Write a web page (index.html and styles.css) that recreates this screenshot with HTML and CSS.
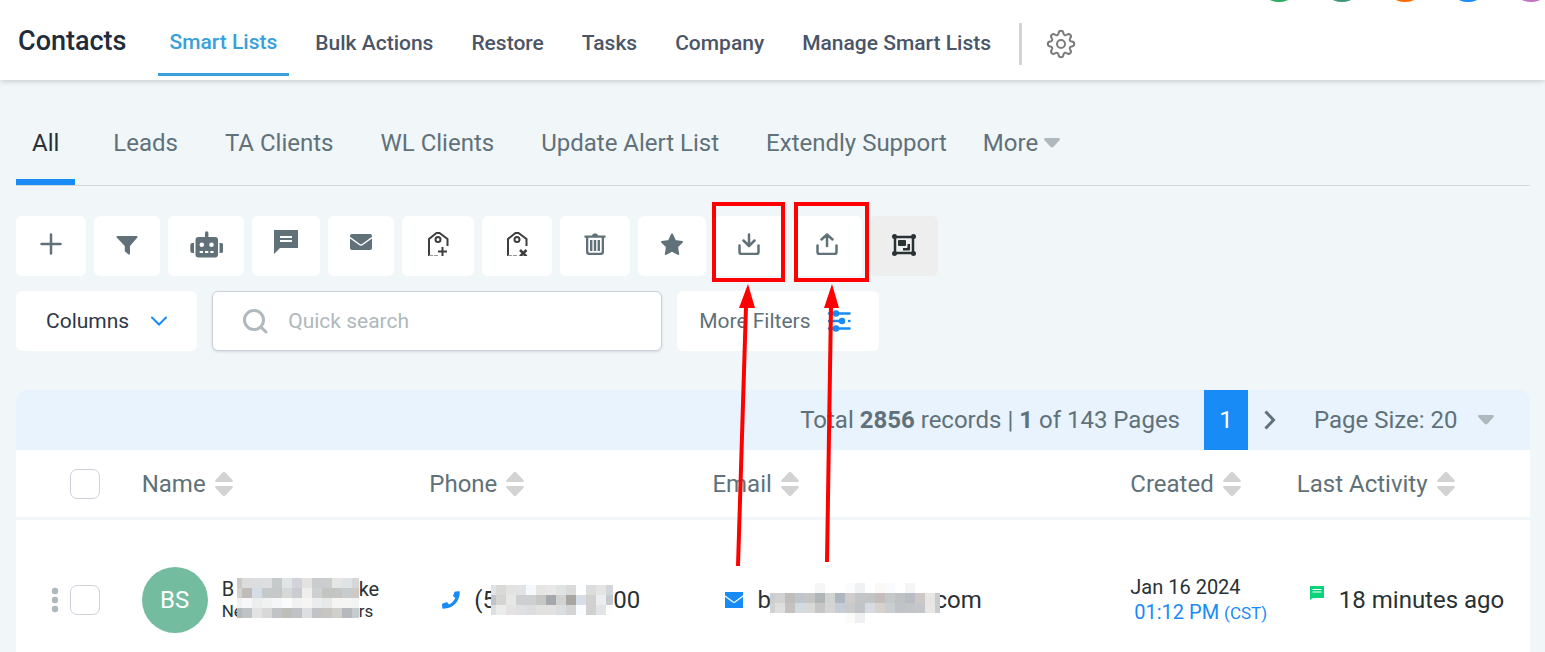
FILE: index.html
```html
<!DOCTYPE html>
<html lang="en">
<head>
    <meta charset="UTF-8">
    <meta name="viewport" content="width=device-width, initial-scale=1.0">
    <title>Contacts - Smart Lists</title>
    <link rel="stylesheet" href="styles.css">
</head>
<body>
    <header class="header">
        <h1 class="title">Contacts</h1>
        <nav class="main-nav">
            <a class="active" href="#">Smart Lists</a>
            <a href="#">Bulk Actions</a>
            <a href="#">Restore</a>
            <a href="#">Tasks</a>
            <a href="#">Company</a>
            <a href="#">Manage Smart Lists</a>
        </nav>
        <button class="settings" aria-label="Settings">
            <svg width="30" height="30" viewBox="0 0 30 30" fill="none" stroke="#7b7b7b" stroke-width="2" stroke-linejoin="round">
                <path d="M12.6 4.2C13 1 17 1 17.4 4.2C17.7 6.3 19.2 6.9 20.9 5.7C23.4 3.8 26.2 6.6 24.3 9.1C23.1 10.8 23.7 12.3 25.8 12.6C29 13 29 17 25.8 17.4C23.7 17.7 23.1 19.2 24.3 20.9C26.2 23.4 23.4 26.2 20.9 24.3C19.2 23.1 17.7 23.7 17.4 25.8C17 29 13 29 12.6 25.8C12.3 23.7 10.8 23.1 9.1 24.3C6.6 26.2 3.8 23.4 5.7 20.9C6.9 19.2 6.3 17.7 4.2 17.4C1 17 1 13 4.2 12.6C6.3 12.3 6.9 10.8 5.7 9.1C3.8 6.6 6.6 3.8 9.1 5.7C10.8 6.9 12.3 6.3 12.6 4.2Z"/>
                <circle cx="15" cy="15" r="4"/>
            </svg>
        </button>
        <div class="avatars">
            <span class="green"></span>
            <span class="teal"></span>
            <span class="orange"></span>
            <span class="blue"></span>
            <span class="purple"></span>
        </div>
    </header>

    <main class="content">
        <nav class="tabs">
            <a class="active" href="#">All</a>
            <a href="#">Leads</a>
            <a href="#">TA Clients</a>
            <a href="#">WL Clients</a>
            <a href="#">Update Alert List</a>
            <a href="#">Extendly Support</a>
            <button class="more">More
                <svg width="16" height="10" viewBox="0 0 16 10" fill="#afb8bc"><path d="M1.500 0h13c1.200 0 1.800 1.200 1 2.200L9.500 8.800c-.8.9-2.200.9-3 0L.5 2.200C-.3 1.200.3 0 1.500 0z"/></svg>
            </button>
        </nav>

        <div class="toolbar">
            <button aria-label="Add contact">
                <svg width="22" height="22" viewBox="0 0 22 22" stroke="#607179" stroke-width="2.500" stroke-linecap="round"><path d="M11 1.500v19M1.500 11h19"/></svg>
            </button>
            <button aria-label="Pipeline change">
                <svg width="22" height="22" class="narrow" viewBox="0 0 22 22" fill="#607179"><path d="M1.500 3h19c1 0 1.300 1 .6 1.700L14 13v7.500c0 1-1 1.300-1.700.7l-3-2.400a1.500 1.500 0 0 1-.5-1.200V13L.9 4.700C.2 4 .5 3 1.500 3z"/></svg>
            </button>
            <button aria-label="Add to automation">
                <svg class="wide" width="33" height="27" viewBox="0 0 33 27" fill="#607179"><path fill-rule="evenodd" d="M15 6V2a1.700 1.700 0 0 1 3.400 0v4H25a3 3 0 0 1 3 3v14.500a3 3 0 0 1-3 3H8.500a3 3 0 0 1-3-3V9a3 3 0 0 1 3-3zM11.800 11.500a2.300 2.300 0 1 0 0 4.600 2.300 2.300 0 0 0 0-4.600zM21.500 11.500a2.300 2.300 0 1 0 0 4.600 2.300 2.300 0 0 0 0-4.600zM9.700 20v2H13v-2zM15 20v2h3.300v-2zM20.300 20v2h3.300v-2z"/><path d="M4 12v10H2.500A2.200 2.200 0 0 1 .3 19.800v-5.600A2.200 2.200 0 0 1 2.500 12zM29.500 12v10H31a2.200 2.200 0 0 0 2.200-2.200v-5.600A2.200 2.200 0 0 0 31 12z"/></svg>
            </button>
            <button class="small" aria-label="Send SMS">
                <svg class="raised" width="24" height="24" viewBox="0 0 24 24"><path fill="#607179" d="M0 0h24v18H6l-6 6z"/><path stroke="#fff" stroke-width="2" d="M6 7h12M6 11h12"/></svg>
            </button>
            <button aria-label="Send email">
                <svg class="narrow raised" width="22" height="18" viewBox="0 0 22 18"><rect y="1" width="22" height="16" rx="2" fill="#607179"/><path d="M0 4.500l9.500 7c1 .8 2 .8 3 0l9.500-7" fill="none" stroke="#fff" stroke-width="1.500"/></svg>
            </button>
            <button aria-label="Add tag">
                <svg width="24" height="24" viewBox="0 0 24 24" fill="none" stroke="#3e3e3e" stroke-width="2"><path d="M3 24V7l7.500-6h3L21.500 7v7"/><path stroke-width="1" stroke="#999" d="M3 23.500h4M8 23.500h4"/><circle cx="12" cy="7.500" r="2.500"/><path d="M16.500 15v9M12 19.500h9"/></svg>
            </button>
            <button class="even" aria-label="Remove tag">
                <svg width="24" height="24" viewBox="0 0 24 24" fill="none" stroke="#3e3e3e" stroke-width="2"><path d="M3 24V7l7.500-6h3L21.500 7v7"/><path stroke-width="1" stroke="#999" d="M3 23.500h4M8 23.500h4"/><circle cx="12" cy="7.500" r="2.500"/><path stroke-width="2.500" d="M15 18l6.500 6.500M21.500 18L15 24.500"/></svg>
            </button>
            <button aria-label="Delete">
                <svg width="22" height="22" viewBox="0 0 22 22" fill="#607179"><path fill-rule="evenodd" d="M8 2.500A2.500 2.500 0 0 1 10 .5h2a2.500 2.500 0 0 1 2 2h7.500v2.300H20V19a3 3 0 0 1-3 3H5a3 3 0 0 1-3-3V4.800H.5V2.500zM4.300 4.800v13.500a1.500 1.500 0 0 0 1.500 1.500h10.400a1.500 1.500 0 0 0 1.500-1.500V4.800z"/><path d="M6 7h2.400v11H6zM9.800 7h2.400v11H9.800zM13.600 7H16v11h-2.400z"/></svg>
            </button>
            <button class="small" aria-label="Send review request">
                <svg width="24" height="22" viewBox="0 0 24 22" fill="#607179" stroke="#607179" stroke-width="2" stroke-linejoin="round"><path d="M12 1.500l3 6.400 7 1-5 5 1.200 7L12 17.500 5.800 20.900l1.200-7-5-5 7-1z"/></svg>
            </button>
            <button aria-label="Export contacts">
                <svg width="22" height="22" viewBox="0 0 22 22" fill="none" stroke="#607179" stroke-width="2.500" stroke-linecap="round" stroke-linejoin="round"><path d="M11 1.500v11M5.500 7.500L11 13l5.500-5.500M1.500 12.500V19a2 2 0 0 0 2 2h15a2 2 0 0 0 2-2v-6.500"/></svg>
            </button>
            <button aria-label="Import contacts">
                <svg width="22" height="22" viewBox="0 0 22 22" fill="none" stroke="#607179" stroke-width="2.500" stroke-linecap="round" stroke-linejoin="round"><path d="M11 13V1.500M5.500 6.500L11 1.500l5.500 5M1.500 12.500V19a2 2 0 0 0 2 2h15a2 2 0 0 0 2-2v-6.500"/></svg>
            </button>
            <button class="small muted" aria-label="Merge contacts">
                <svg width="24" height="22" viewBox="0 0 24 22" fill="#2a3135"><path fill="none" stroke="#2a3135" stroke-width="2.500" d="M3 3h18v16H3z"/><circle cx="2.500" cy="2.500" r="2.500"/><circle cx="21.500" cy="2.500" r="2.500"/><circle cx="2.500" cy="19.500" r="2.500"/><circle cx="21.500" cy="19.500" r="2.500"/><rect x="6" y="6" width="8" height="6" rx="1"/><path d="M15.500 10H18v5.500a1 1 0 0 1-1 1h-6V14h3.500a1 1 0 0 0 1-1z"/></svg>
            </button>
        </div>

        <div class="filters">
            <button class="columns">Columns
                <svg width="16" height="10" viewBox="0 0 16 10" fill="none" stroke="#188bf6" stroke-width="2" stroke-linecap="round"><path d="M1 1.500l7 7 7-7"/></svg>
            </button>
            <label class="search">
                <svg width="25" height="25" viewBox="0 0 25 25" fill="none" stroke="#afb8bc" stroke-width="3" stroke-linecap="round"><circle cx="11" cy="11" r="9.500"/><path d="M18 18l5 5"/></svg>
                <input type="text" placeholder="Quick search" aria-label="Quick search">
            </label>
            <button class="more-filters">More Filters
                <svg width="24" height="22" viewBox="0 0 24 22" fill="#188bf6" stroke="#188bf6" stroke-width="2.500" stroke-linecap="round"><path d="M2 3.500h20.500M2 11h14M22 11h.500M2 18.500h20.500"/><circle cx="9" cy="3.500" r="2"/><circle cx="15" cy="11" r="2"/><circle cx="9" cy="18.500" r="2"/></svg>
            </button>
        </div>

        <section class="panel">
            <div class="pager">
                <p>Total <b>2856</b> records | <b>1</b> of 143 Pages</p>
                <button class="page">1</button>
                <button class="next" aria-label="Next page">
                    <svg width="12" height="20" viewBox="0 0 12 20" fill="none" stroke="#607179" stroke-width="3"><path d="M1.500 1.500l8 8.500-8 8.500"/></svg>
                </button>
                <label class="page-size">
                    <select aria-label="Page size">
                        <option>Page Size: 20</option>
                    </select>
                    <svg width="16" height="10" viewBox="0 0 16 10" fill="#afb8bc"><path d="M1.500 0h13c1.200 0 1.800 1.200 1 2.200L9.500 8.800c-.8.9-2.200.9-3 0L.5 2.200C-.3 1.200.3 0 1.500 0z"/></svg>
                </label>
            </div>

            <table class="contacts">
                <colgroup>
                    <col class="col-check">
                    <col class="col-name">
                    <col class="col-phone">
                    <col class="col-email">
                    <col class="col-created">
                    <col class="col-activity">
                </colgroup>
                <thead>
                    <tr>
                        <th><div class="check"><input type="checkbox" aria-label="Select all"></div></th>
                        <th>Name <svg class="sort" width="18" height="24" viewBox="0 0 18 24"><path d="M7.600.6a2 2 0 0 1 2.800 0l7 7.400c1 1 .3 2-.8 2H1.400c-1.100 0-1.800-1-.8-2zM7.600 23.400a2 2 0 0 0 2.800 0l7-7.400c1-1 .3-2-.8-2H1.400c-1.100 0-1.800 1-.8 2z"/></svg></th>
                        <th>Phone <svg class="sort" width="18" height="24" viewBox="0 0 18 24"><path d="M7.600.6a2 2 0 0 1 2.800 0l7 7.400c1 1 .3 2-.8 2H1.400c-1.100 0-1.800-1-.8-2zM7.600 23.400a2 2 0 0 0 2.800 0l7-7.400c1-1 .3-2-.8-2H1.400c-1.100 0-1.800 1-.8 2z"/></svg></th>
                        <th>Email <svg class="sort" width="18" height="24" viewBox="0 0 18 24"><path d="M7.600.6a2 2 0 0 1 2.800 0l7 7.400c1 1 .3 2-.8 2H1.400c-1.100 0-1.800-1-.8-2zM7.600 23.400a2 2 0 0 0 2.800 0l7-7.400c1-1 .3-2-.8-2H1.400c-1.100 0-1.800 1-.8 2z"/></svg></th>
                        <th>Created <svg class="sort" width="18" height="24" viewBox="0 0 18 24"><path d="M7.600.6a2 2 0 0 1 2.800 0l7 7.400c1 1 .3 2-.8 2H1.400c-1.100 0-1.800-1-.8-2zM7.600 23.400a2 2 0 0 0 2.800 0l7-7.400c1-1 .3-2-.8-2H1.400c-1.100 0-1.800 1-.8 2z"/></svg></th>
                        <th>Last Activity <svg class="sort" width="18" height="24" viewBox="0 0 18 24"><path d="M7.600.6a2 2 0 0 1 2.800 0l7 7.400c1 1 .3 2-.8 2H1.400c-1.100 0-1.800-1-.8-2zM7.600 23.400a2 2 0 0 0 2.800 0l7-7.400c1-1 .3-2-.8-2H1.400c-1.100 0-1.800 1-.8 2z"/></svg></th>
                    </tr>
                </thead>
                <tbody>
                    <tr>
                        <td>
                            <div class="check">
                                <svg width="8" height="26" viewBox="0 0 8 26" fill="#afb8bc"><circle cx="4" cy="4" r="3.200"/><circle cx="4" cy="13" r="3.200"/><circle cx="4" cy="22" r="3.200"/></svg>
                                <input type="checkbox" aria-label="Select contact">
                            </div>
                        </td>
                        <td>
                            <div class="cell">
                                <span class="initials">BS</span>
                                <div class="masked-name">
                                    <div class="head"><span>B</span><small>Ne</small></div>
                                    <svg class="mosaic" width="122" height="40" data-cells="c9cac8 dcdcdc dcdde1 dcdee0 c6cacb dfe4e5 d1d3d8 e5e3e1 c9cdd0 cbcdcf e6e7e5 dde3e7 d6d7d9|d2d3ce c0bdb9 d4dce6 c6c9c9 c4c8c8 d5d8d4 caccd2 eeeeec cfd1d1 c3c5c2 c5c6c4 c9cccf cdc9c5|f1f1f2 f6f7f9 eceded f0f1f1 f4f6f8 fafbfa f2f2f2 f6f5f4 ebeced e7e9e9 f6f5f3 f5f5f4 f2f4f4|b3b8bb c0c3c6 e2e3e2 d8d8d8 c1c4c6 bfbfba bfc3c6 dcdee0 c1c3c6 c7c6c2 cfd0cc b5b8bc c6cccd"></svg>
                                    <div><span>ke</span><small>rs</small></div>
                                </div>
                            </div>
                        </td>
                        <td>
                            <div class="cell inset">
                                <svg width="18" height="18" viewBox="0 0 18 18" fill="#188bf6"><path d="M13.500 0.500L17 .300c.6 0 .8.400.8 1C17.500 11 11 17.500 1.300 17.800c-.6 0-.9-.3-1-.8L0 13.500c0-.5.300-.8.700-1l3.600-1.300c.4-.1.800 0 1.100.3l1.600 1.900c3-1.400 5-3.400 6.300-6.300L11.400 5.400c-.3-.3-.4-.7-.2-1.100L12.500 1c.2-.3.500-.5 1-.5z"/></svg>
                                <div class="masked phone">
                                    <span>(5</span>
                                    <svg class="mosaic" width="122" height="30" data-cells="dfe4e6 d9d9d8 e2e2e2 e2e3e4 f4f9fd e5e5e4 e8e8e8 dfe3e3 dadada fcfeff dcdcdc e4e4e4 d2d6da|c0c3ca d4d4d3 e6e8e6 ccd0d1 cdcfd0 c6c6c5 a3a8ad d2d2d2 a8a6a1 d5dde6 d1d1d0 ebedf0 c5cbd2|dcdfe2 ebeded e4e3e1 dfe0e2 dbdde1 e1e1e0 e0e1e0 dbdee1 d4d4d4 fafdff d0d0d0 e2e3e6 fdfdfd"></svg>
                                    <span>00</span>
                                </div>
                            </div>
                        </td>
                        <td>
                            <div class="cell inset">
                                <svg width="18" height="18" viewBox="0 0 18 18"><rect y="1" width="18" height="16" fill="#188bf6"/><path d="M0 5l8 6c.7.500 1.300.500 2 0l8-6" fill="none" stroke="#fff" stroke-width="1.200"/></svg>
                                <div class="masked email">
                                    <span>b</span>
                                    <svg class="mosaic" width="170" height="40" data-cells="fff fff fff fff fff f6f6f6 fff fff fcfcfc f0f1f2 fff fbf8f5 fafbfe fff f5f5f5 fff fff fff|c9ced0 d2d2d2 c0bcbb bfc5cb c5c6c4 b0b5b8 d3d4d2 aeb6bf cfcccb c2c6c8 c2c4c5 c3bebb c5c8c9 bfc1c2 b7bdc2 cbc8c6 e8e6e3 c7cdcf|d0d2d2 dedede c4c1c0 d2dbdf d8d8d7 c5c6c5 d4d5d4 c5ced6 c9cacc c0c4c9 d8dce2 d8d2cf c9ced3 bfc3c7 c1c5c8 c5c6c9 e9e7e3 c8cdcf|fff fff fff fff fff fff fff fff fbfbfa eff0f1 fff fff fff fff fff fff fff fff"></svg>
                                    <span class="under">com</span>
                                </div>
                            </div>
                        </td>
                        <td>
                            <div class="date">Jan 16 2024</div>
                            <div class="date time">01:12 PM <small>(CST)</small></div>
                        </td>
                        <td>
                            <div class="cell inset">
                                <svg class="sms" width="14" height="14" viewBox="0 0 14 14"><path fill="#0bd37c" d="M0 0h14v12H3l-3 2z"/><path stroke="#fff" d="M2.500 3.500h9M2.500 6h9"/></svg>
                                <span>18 minutes ago</span>
                            </div>
                        </td>
                    </tr>
                </tbody>
            </table>
        </section>
    </main>

    <svg class="callout" width="160" height="370" viewBox="0 0 160 370" fill="none" stroke="#fe0000" stroke-width="4">
        <path d="M4 4h69v76H4zM86 4h71v76H86z"/>
        <path d="M28 366L36 106M117 362L121 106"/>
        <path fill="#fe0000" stroke="none" d="M38 84l7 24H29zM122 84l7 24h-15z"/>
    </svg>

    <script src="mosaic.js"></script>
</body>
</html>
```
FILE: styles.css
```css
* {
    margin: 0;
    padding: 0;
    box-sizing: border-box;
}

body {
    min-height: 100vh;
    font-family: Roboto, "Liberation Sans", sans-serif;
    font-size: 24px;
    color: #607179;
    background: #f1f6f9;
}

button, input, select {
    font: inherit;
    color: inherit;
    background: none;
    border: none;
}

button {
    cursor: pointer;
}

a {
    color: inherit;
    text-decoration: none;
}

svg {
    display: block;
    flex-shrink: 0;
}

/* header */
.header {
    position: relative;
    display: flex;
    align-items: center;
    height: 80px;
    padding-left: 18px;
    background: #fff;
    box-shadow: 0 1px 6px rgba(0, 0, 0, 0.2);
}

.title {
    margin-right: 31px;
    padding-top: 2px;
    font-size: 27px;
    font-weight: 500;
    color: #222b3a;
}

.main-nav {
    display: flex;
    gap: 14px;
    padding-top: 4px;
    font-size: 21px;
    font-weight: 500;
    color: #4a5568;
    white-space: nowrap;
}

.main-nav a {
    height: 68px;
    padding: 0 12px;
    line-height: 70px;
}

.main-nav .active {
    color: #38a0db;
    border-bottom: 3px solid #38a0db;
    line-height: 68px;
}

.settings {
    height: 42px;
    margin: 8px 0 0 16px;
    padding-left: 24px;
    border-left: 3px solid #d1d3d8;
}

.avatars {
    position: absolute;
    top: 0;
    right: 0;
    display: flex;
    align-items: flex-end;
    gap: 21px;
    width: 287px;
    height: 2px;
    overflow: hidden;
}

.avatars span {
    flex: 0 0 42px;
    height: 42px;
    border-radius: 50%;
}

.green { background: #27ae60; }
.teal { background: #3f967c; }
.orange { background: #ff6a00; }
.blue { background: #188bf6; }
.purple { background: #c573bd; }

.content {
    padding: 20px 15px 0 16px;
}

/* list tabs */
.tabs {
    display: flex;
    height: 86px;
    border-bottom: 1px solid #d3dade;
    white-space: nowrap;
}

.tabs a {
    margin-right: 15px;
    padding: 0 16px;
    line-height: 86px;
}

.tabs .active {
    margin-right: 22px;
    color: #2a3135;
    border-bottom: 6px solid #188bf6;
}

.tabs a:nth-child(6) {
    margin-right: 4px;
}

.more {
    display: flex;
    align-items: center;
    gap: 6px;
    padding-left: 16px;
}

/* toolbar */
.toolbar {
    display: flex;
    gap: 8px;
    margin: 30px 0 15px;
}

.toolbar button {
    display: flex;
    align-items: center;
    justify-content: center;
    height: 60px;
    padding: 0 24px 4px;
    border-radius: 6px;
    background: #fff;
}

.toolbar .small {
    padding: 0 22px 4px;
}

.toolbar .even {
    padding: 0 23px 4px;
}

.toolbar .narrow {
    margin: 0 -2px;
}

.toolbar .wide {
    margin: 0 -3px 0 -2px;
}

.toolbar .raised {
    margin-bottom: 4px;
}

.toolbar .muted {
    padding-bottom: 2px;
    background: #eee;
}

.filters {
    display: flex;
    gap: 15px;
    font-size: 21px;
}

.filters > * {
    display: flex;
    align-items: center;
    height: 60px;
    border-radius: 6px;
    background: #fff;
}

.columns {
    gap: 22px;
    padding: 0 30px;
    color: #2d3748;
}

.search {
    flex: 0 1 450px;
    gap: 20px;
    padding: 0 30px;
    border: 1px solid #cbd2db;
    box-shadow: 0 1px 3px rgba(0, 0, 0, 0.12);
}

.search input {
    flex: 1;
    min-width: 0;
    outline: none;
}

.search input::placeholder {
    color: #afb8bc;
}

.more-filters {
    gap: 16px;
    padding: 0 28px 0 22px;
}

/* contact list */
.panel {
    margin-top: 39px;
    border-radius: 10px 10px 0 0;
    background: #fff;
    overflow: hidden;
}

.pager {
    display: flex;
    align-items: center;
    justify-content: flex-end;
    height: 60px;
    padding-right: 36px;
    background: #e8f3fe;
    white-space: nowrap;
}

.pager b {
    font-weight: 700;
}

.page {
    width: 44px;
    height: 60px;
    margin-left: 24px;
    color: #fff;
    background: #188bf6;
}

.next {
    padding: 0 16px;
}

.page-size {
    display: flex;
    align-items: center;
    gap: 20px;
    margin-left: 22px;
}

.page-size select {
    appearance: none;
}

.contacts {
    width: 100%;
    border-collapse: separate;
    border-spacing: 0;
    table-layout: fixed;
    color: #2a3135;
    white-space: nowrap;
}

.col-check { width: 8.3%; }
.col-name { width: 19%; }
.col-phone { width: 18.7%; }
.col-email { width: 27.6%; }
.col-created { width: 11%; }

.contacts th {
    height: 70px;
    border-bottom: 3px solid #f1f6f9;
    font-weight: 400;
    color: #607179;
    text-align: left;
}

.contacts td {
    height: 132px;
    padding: 47px 0 19px;
}

.sort {
    display: inline-block;
    margin-left: 3px;
    vertical-align: -4px;
    fill: #d3d3d3;
}

.check {
    display: flex;
    align-items: center;
    justify-content: flex-end;
    gap: 11px;
    padding-right: 42px;
}

.check input {
    appearance: none;
    width: 30px;
    height: 30px;
    border: 1px solid #cfd0dc;
    border-radius: 7px;
}

.cell {
    display: flex;
    align-items: center;
    gap: 14px;
}

.inset {
    padding-left: 13px;
}

.initials {
    width: 66px;
    height: 66px;
    border-radius: 50%;
    background: #74bc9f;
    color: #fff;
    line-height: 66px;
    text-align: center;
}

.masked-name {
    display: flex;
    font-size: 20px;
    line-height: 22px;
}

.masked-name span, .masked-name small {
    display: block;
}

.masked-name small {
    font-size: 17px;
}

.head {
    width: 15px;
}

/* the blocks lie over the ends of the text beside them */
.masked {
    display: flex;
    align-items: center;
}

.phone span:first-child {
    width: 17px;
}

.email span:first-child {
    width: 13px;
}

.email .mosaic {
    margin-top: 6px;
}

.under {
    margin-left: -6px;
}

.mosaic {
    position: relative;
    z-index: 1;
}

.date {
    font-size: 20px;
    line-height: 25px;
}

.time {
    padding-left: 4px;
    color: #188bf6;
}

.time small {
    font-size: 17px;
}

.sms {
    margin: 0 1px 14px 0;
}

/* marks over the export and import buttons */
.callout {
    position: absolute;
    top: 200px;
    left: 710px;
    z-index: 2;
    pointer-events: none;
}
```
FILE: mosaic.js
```js
// Fills each .mosaic with 10px blocks, the first column is half a block wide
document.querySelectorAll('.mosaic').forEach(svg => {
    svg.dataset.cells.split('|').forEach((row, y) => {
        row.split(' ').forEach((color, x) => {
            const rect = document.createElementNS('http://www.w3.org/2000/svg', 'rect');
            rect.setAttribute('x', x ? x * 10 - 5 : 0);
            rect.setAttribute('y', y * 10);
            rect.setAttribute('width', x ? 10 : 5);
            rect.setAttribute('height', 10);
            rect.setAttribute('fill', '#' + color);
            svg.appendChild(rect);
        });
    });
});
```
